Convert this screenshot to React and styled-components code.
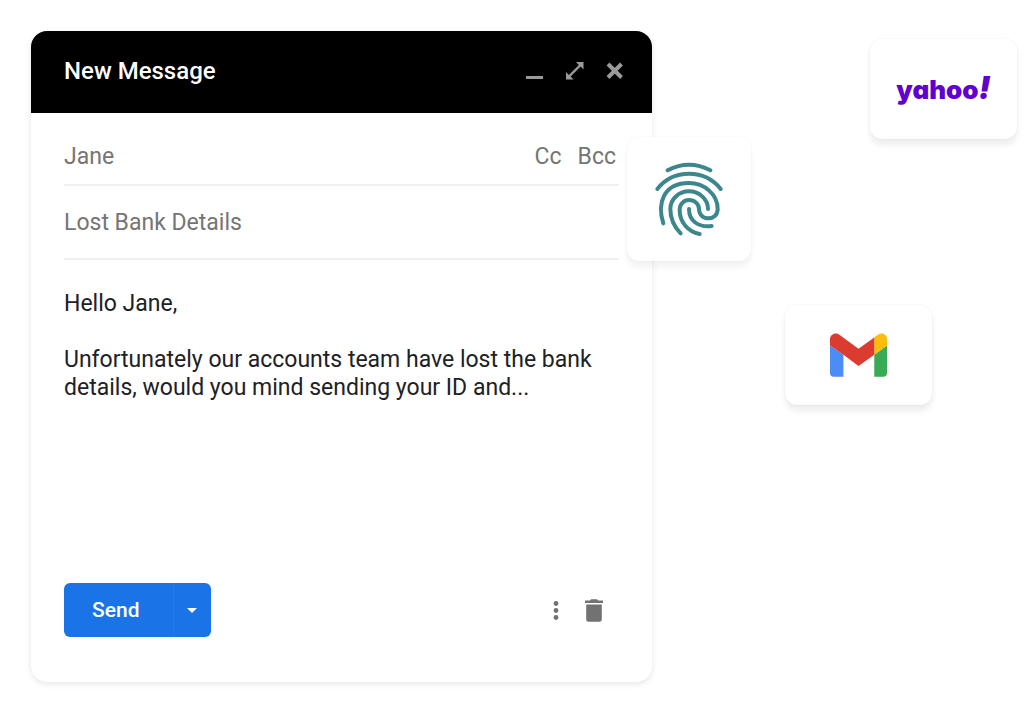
import React from 'react'
import styled, { createGlobalStyle } from "styled-components";

const bodyText = `Hello Jane,

Unfortunately our accounts team have lost the bank details, would you mind sending your ID and...`

const App = () => {
    return (
        <>
            <GlobalStyle />
            <StyledPage>
                <StyledWindow>
                    <StyledHeader>
                        <StyledTitle>New Message</StyledTitle>
                        <StyledControls>
                            <IconButton type="button" aria-label="Minimize">
                                <svg width="18" height="18" viewBox="0 0 18 18" fill="currentColor">
                                    <path d="M0 14h17v3H0z" />
                                </svg>
                            </IconButton>
                            <IconButton type="button" aria-label="Full screen">
                                <svg width="18" height="18" viewBox="0 0 18 18" fill="currentColor">
                                    <path d="M10 0h7.500v7.500L14.600 4.600 4.600 14.600 7.500 17.500H0V10l2.900 2.900L12.900 2.900z" />
                                </svg>
                            </IconButton>
                            <IconButton type="button" aria-label="Close">
                                <svg width="18" height="18" viewBox="0 0 18 18" fill="none" stroke="currentColor" strokeWidth="4">
                                    <path d="M2 2l13.500 13.500M15.500 2L2 15.500" />
                                </svg>
                            </IconButton>
                        </StyledControls>
                    </StyledHeader>
                    <StyledForm onSubmit={(e) => e.preventDefault()}>
                        <FieldRow $bottom={13}>
                            <FieldInput aria-label="To" defaultValue="Jane" />
                            <CopyButton type="button">Cc</CopyButton>
                            <CopyButton type="button">Bcc</CopyButton>
                        </FieldRow>
                        <FieldRow $bottom={21}>
                            <FieldInput aria-label="Subject" defaultValue="Lost Bank Details" />
                        </FieldRow>
                        <MessageBody aria-label="Message" rows={10} spellCheck={false} defaultValue={bodyText} />
                        <StyledFooter>
                            <SendGroup>
                                <SendButton type="submit">Send</SendButton>
                                <SendOptions type="button" aria-label="Send options">
                                    <svg width="10" height="5" viewBox="0 0 10 5" fill="currentColor">
                                        <path d="M0 0h10L5 5z" />
                                    </svg>
                                </SendOptions>
                            </SendGroup>
                            <FooterTools>
                                <IconButton type="button" $dark aria-label="More">
                                    <svg width="6" height="20" viewBox="0 0 6 20" fill="currentColor">
                                        <circle cx="3" cy="3.500" r="2.400" />
                                        <circle cx="3" cy="10.500" r="2.400" />
                                        <circle cx="3" cy="17.500" r="2.400" />
                                    </svg>
                                </IconButton>
                                <IconButton type="button" $dark aria-label="Delete">
                                    <svg width="18" height="24" viewBox="0 0 18 24" fill="currentColor">
                                        <path d="M0 2.500h5l1-1.200h6l1 1.200h5v2.500H0z" />
                                        <path d="M1.200 6.500h15.600v15a2.300 2.300 0 0 1-2.300 2.300h-11a2.300 2.300 0 0 1-2.300-2.300z" />
                                    </svg>
                                </IconButton>
                            </FooterTools>
                        </StyledFooter>
                    </StyledForm>
                    <FingerprintBadge>
                        <svg width="72" height="80" viewBox="100 100 216 240" fill="none" stroke="#3b878c" strokeWidth="12" strokeLinecap="round">
                            <path d="M144 134Q208 100 272 134" />
                            <path d="M113 190A122 122 0 0 1 303 190" />
                            <path d="M131 293C112 235 130 172 208 172C255 172 294 207 294 250C294 268 281 278 266 278C249 278 238 265 238 250C238 235 225 223 208 223C192 223 180 236 180 252C180 290 205 318 240 325" />
                            <path d="M183 323C160 300 152 272 152 250C152 220 177 197 208 197C240 197 265 222 265 250" />
                            <path d="M208 250C208 285 235 306 276 301" />
                        </svg>
                    </FingerprintBadge>
                </StyledWindow>
                <StyledProviders>
                    <ProviderCard $align="flex-end">
                        <YahooLogo>yahoo<em>!</em></YahooLogo>
                    </ProviderCard>
                    <ProviderCard $align="flex-start">
                        <svg width="57" height="44" viewBox="0 0 170 130" role="img" aria-label="Gmail">
                            <path fill="#4b8df5" d="M0 37l40 27v66H11a11 11 0 0 1-11-11z" />
                            <path fill="#3aaa57" d="M132 64l38-27v82a11 11 0 0 1-11 11h-27z" />
                            <path fill="#fcbc0a" d="M132 13l12-9c12-8 26 0 26 14v19l-38 27z" />
                            <path fill="#dc3b30" d="M0 37V18C0 4 16-4 29 5l56 41 47-33v51L85 98 40 64z" />
                        </svg>
                    </ProviderCard>
                </StyledProviders>
            </StyledPage>
        </>
    )
}
export default App

const GlobalStyle = createGlobalStyle`
* {
    box-sizing: border-box;
}
body {
    margin: 0;
    background: #fff;
    font-family: Roboto, "Liberation Sans", sans-serif;
}
button, input, textarea {
    font: inherit;
    color: inherit;
    border: 0;
    padding: 0;
    margin: 0;
    background: none;
    outline: none;
}
button {
    cursor: pointer;
}
svg {
    display: block;
}
`

const StyledPage = styled.main`
display: flex;
align-items: flex-start;
gap: 133px;
padding: 31px 7px 31px 31px;
`

const StyledWindow = styled.section`
position: relative;
flex: 1;
min-width: 0;
border-radius: 16px;
background: #fff;
box-shadow: 0 2px 6px rgba(0, 0, 0, 0.1);
font-size: 23px;
line-height: 28px;
`

const StyledHeader = styled.header`
display: flex;
align-items: center;
justify-content: space-between;
height: 82px;
padding: 0 28px 2px 33px;
border-radius: 16px 16px 0 0;
background: #000;
`

const StyledTitle = styled.h1`
margin: 0;
color: #fff;
font-size: 24px;
line-height: 28px;
font-weight: 500;
`

const StyledControls = styled.div`
display: flex;
gap: 22px;
`

const IconButton = styled.button`
display: flex;
align-items: center;
color: ${({ $dark }) => ($dark ? '#727272' : '#9a9a9a')};
`

const StyledForm = styled.form`
padding: 7px 33px 45px;
`

const FieldRow = styled.div`
display: flex;
gap: 16px;
padding: 23px 3px ${({ $bottom }) => $bottom}px 0;
border-bottom: 2px solid #f0f0f0;
color: #757575;
`

const FieldInput = styled.input`
flex: 1;
min-width: 0;
height: 28px;
`

const CopyButton = styled.button`
height: 28px;
`

const MessageBody = styled.textarea`
display: block;
width: 100%;
margin: 30px 0 13px;
color: #202124;
resize: none;
overflow: hidden;
`

const StyledFooter = styled.div`
display: flex;
align-items: center;
justify-content: space-between;
padding-right: 16px;
`

const SendGroup = styled.div`
display: flex;
height: 54px;
border-radius: 6px;
overflow: hidden;
background: #1b73e8;
color: #fff;
`

const SendButton = styled.button`
padding: 0 33px 0 28px;
font-size: 21px;
font-weight: 500;
border-right: 1px solid #3a72d4;
`

const SendOptions = styled.button`
display: flex;
align-items: center;
justify-content: center;
width: 37px;
`

const FooterTools = styled.div`
display: flex;
align-items: center;
gap: 26px;
`

/* hangs over the right edge of the message window */
const FingerprintBadge = styled.div`
position: absolute;
top: 106px;
right: -99px;
display: flex;
align-items: center;
justify-content: center;
width: 124px;
height: 124px;
border-radius: 12px;
background: #fff;
box-shadow: 0 6px 6px rgba(0, 0, 0, 0.05), 0 0 2px rgba(0, 0, 0, 0.06);
`

const StyledProviders = styled.aside`
display: flex;
flex-direction: column;
gap: 166px;
width: 232px;
margin-top: 8px;
`

const ProviderCard = styled.div`
display: flex;
align-items: center;
justify-content: center;
align-self: ${({ $align }) => $align};
width: 147px;
height: 100px;
border-radius: 12px;
background: #fff;
box-shadow: 0 6px 6px rgba(0, 0, 0, 0.07), 0 0 2px rgba(0, 0, 0, 0.08);
`

const YahooLogo = styled.span`
color: #6001d2;
font-family: Inter, Lato, sans-serif;
font-size: 26px;
line-height: 32px;
font-weight: 900;
font-feature-settings: "cv11";

em {
    font-size: 32px;
    font-style: italic;
}
`
